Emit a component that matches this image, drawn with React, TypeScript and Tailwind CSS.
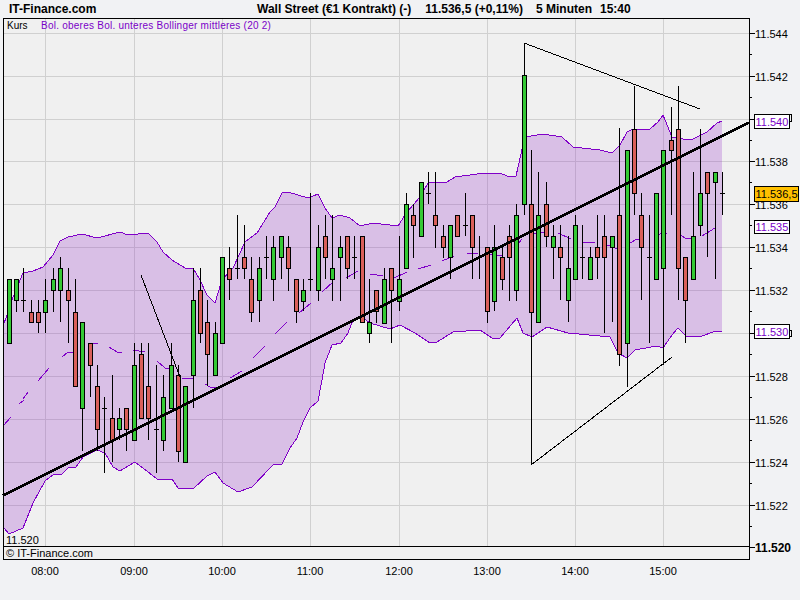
type C = [number, number, number, number, "g" | "r" | "d"];

// high, body top, body bottom, low, colour; first candle is 25 minutes before 08:00
const candles: C[] = [
  [279, 279, 343, 343, "g"], [279, 279, 300, 312, "g"], [268, 300, 300, 312, "d"], [300, 312, 322, 322, "r"],
  [300, 312, 322, 333, "r"], [279, 300, 312, 333, "g"], [268, 279, 290, 312, "g"], [257, 268, 290, 322, "g"],
  [268, 290, 300, 343, "r"], [279, 312, 386, 386, "r"], [322, 322, 408, 451, "g"], [343, 343, 365, 397, "r"],
  [365, 386, 429, 451, "r"], [397, 408, 408, 473, "d"], [375, 418, 440, 462, "r"], [408, 418, 429, 440, "g"],
  [408, 408, 429, 451, "r"], [343, 365, 440, 440, "g"], [343, 354, 418, 418, "r"], [343, 386, 418, 440, "r"],
  [365, 429, 429, 473, "d"], [375, 397, 440, 451, "g"], [343, 365, 408, 408, "g"], [365, 375, 451, 462, "r"],
  [386, 386, 462, 462, "g"], [268, 300, 375, 408, "g"], [268, 290, 333, 343, "r"], [300, 322, 354, 386, "r"],
  [322, 333, 375, 375, "g"], [257, 257, 343, 343, "g"], [247, 268, 279, 300, "r"], [215, 268, 268, 279, "d"],
  [225, 257, 268, 279, "r"], [257, 279, 312, 322, "r"], [257, 268, 300, 322, "g"], [236, 257, 257, 279, "d"],
  [236, 247, 279, 301, "g"], [236, 236, 257, 279, "g"], [236, 247, 268, 291, "r"], [279, 279, 311, 323, "r"],
  [279, 290, 301, 311, "g"], [193, 279, 279, 291, "d"], [225, 247, 290, 301, "g"], [215, 236, 257, 279, "r"],
  [215, 268, 279, 301, "g"], [236, 247, 257, 301, "g"], [236, 236, 268, 279, "r"], [236, 257, 257, 279, "d"],
  [236, 236, 322, 322, "r"], [279, 322, 333, 343, "g"], [290, 290, 311, 323, "r"], [268, 279, 323, 323, "g"],
  [268, 268, 290, 343, "r"], [236, 279, 301, 311, "g"], [193, 204, 268, 268, "g"], [204, 215, 225, 258, "r"],
  [182, 182, 236, 236, "g"], [172, 193, 193, 204, "d"], [172, 215, 225, 248, "r"], [225, 236, 247, 258, "r"],
  [225, 225, 257, 279, "g"], [215, 215, 236, 236, "r"], [193, 225, 225, 236, "d"], [215, 215, 247, 279, "r"],
  [236, 257, 257, 279, "d"], [247, 247, 311, 323, "r"], [225, 247, 301, 311, "g"], [247, 257, 279, 290, "r"],
  [225, 236, 257, 301, "r"], [204, 215, 290, 301, "g"], [43, 75, 204, 215, "g"], [150, 204, 312, 465, "r"],
  [172, 215, 322, 322, "g"], [182, 204, 236, 247, "r"], [225, 236, 247, 279, "g"], [225, 247, 257, 300, "r"],
  [236, 268, 300, 322, "g"], [215, 225, 279, 279, "g"], [225, 257, 257, 279, "d"], [247, 257, 279, 279, "g"],
  [215, 247, 257, 279, "r"], [215, 236, 257, 333, "r"], [236, 236, 247, 322, "g"], [128, 215, 354, 366, "r"],
  [150, 150, 343, 387, "g"], [86, 129, 193, 215, "r"], [193, 215, 247, 300, "r"], [215, 257, 257, 343, "d"],
  [193, 193, 279, 279, "g"], [150, 150, 268, 365, "g"], [107, 140, 150, 215, "r"], [86, 129, 268, 300, "r"],
  [257, 257, 300, 343, "r"], [172, 236, 279, 279, "g"], [129, 193, 225, 236, "g"], [172, 172, 193, 257, "r"],
  [172, 172, 182, 279, "g"], [172, 193, 193, 215, "d"],
];

const upper: [number, number][] = [
  [4, 323], [6, 318], [11, 302], [23, 273], [33, 271], [43, 267], [53, 255], [60, 241], [68, 237], [82, 234], [97, 238],
  [120, 232], [128, 235], [148, 233], [157, 242], [163, 252], [172, 260], [185, 268], [193, 268], [200, 280], [207, 295],
  [215, 303], [222, 280], [233, 268], [245, 242], [257, 233], [270, 212], [275, 207], [282, 193], [288, 192], [308, 198],
  [318, 194], [325, 208], [332, 218], [340, 215], [350, 218], [360, 226], [373, 223], [398, 226], [407, 212], [420, 197],
  [428, 183], [447, 182], [455, 177], [477, 174], [500, 173], [507, 176], [516, 176], [523, 145], [525, 137], [543, 134],
  [562, 137], [573, 147], [600, 150], [612, 153], [620, 145], [627, 132], [633, 129], [650, 129], [658, 122], [663, 115],
  [672, 137], [683, 139], [693, 139], [707, 132], [717, 123], [722, 121],
];

const lower: [number, number][] = [
  [4, 528], [9, 534], [23, 528], [33, 503], [45, 481], [53, 475], [62, 474], [68, 468], [76, 467], [83, 457], [97, 450],
  [105, 453], [113, 467], [120, 471], [135, 462], [143, 468], [157, 479], [172, 479], [178, 488], [193, 489], [207, 476],
  [215, 472], [223, 483], [238, 492], [252, 487], [270, 468], [274, 464], [282, 464], [290, 448], [297, 438], [303, 422],
  [310, 408], [318, 401], [322, 380], [325, 363], [332, 345], [341, 343], [348, 333], [353, 320], [360, 316], [370, 323],
  [390, 329], [400, 325], [415, 333], [430, 343], [437, 342], [453, 332], [480, 330], [492, 338], [500, 338], [517, 318],
  [523, 333], [532, 337], [547, 327], [568, 333], [610, 337], [618, 353], [627, 358], [635, 350], [657, 346], [663, 348],
  [672, 335], [678, 328], [686, 336], [702, 336], [713, 332], [722, 331],
];

const middle: string[] = [
  "4,425 11,417", "19,404 24,400", "23,399 28,392", "38,381 49,368", "62,357 68,352 73,352", "89,344 98,343",
  "109,347 117,352 122,352", "133,350 145,352", "157,361 165,368 170,368", "182,378 193,379", "205,384 210,387 218,387",
  "230,378 242,371", "253,358 265,346", "275,334 287,322", "299,313 311,303", "322,292 333,282", "346,278 358,271",
  "370,274 383,276", "394,278 407,272", "418,269 431,265", "442,261 454,256", "467,253 478,253", "490,254 502,256",
  "515,248 522,239", "534,234 547,232", "558,233 571,239", "583,242 595,243", "607,245 618,249", "630,243 637,239 643,239",
  "654,235 667,233", "678,233 685,238 691,238", "702,236 715,228",
];

const pts = (a: [number, number][]) => a.map((p) => p.join(",")).join(" ");
const band = pts(upper) + " " + pts([...lower].reverse());

const hGrid = [33, 76, 119, 161, 204, 247, 290, 333, 376, 419, 462, 505];
const vGrid = [45, 134, 222, 310, 399, 487, 575, 663];
const hours = ["08:00", "09:00", "10:00", "11:00", "12:00", "13:00", "14:00", "15:00"];
const yLabels = ["11.544", "11.542", "", "11.538", "11.536", "11.534", "11.532", "", "11.528", "11.526", "11.524", "11.522"];
const minor = [54, 97, 140, 182, 225, 268, 311, 354, 397, 440, 483, 526];
const FONT = "'Liberation Sans', Arial, sans-serif";

export default function App() {
  return (
    <div className="flex h-[600px] w-[800px] flex-col overflow-hidden bg-[#f1f2f4] font-['Liberation_Sans',Arial,sans-serif] text-black">
      <div className="flex h-[18px] items-center whitespace-pre text-[12px] font-bold leading-none">
        <span className="ml-[9px] w-[248px]">IT-Finance.com</span>
        <span>Wall Street (€1 Kontrakt) (-)</span>
        <span className="ml-[14px]">11.536,5 (+0,11%)</span>
        <span className="ml-[13px]">5 Minuten</span>
        <span className="ml-[8px]">15:40</span>
      </div>
      <svg width={800} height={582} viewBox="0 18 800 582" className="block" fontFamily={FONT}>
        <rect x={3} y={18} width={746} height={541} fill="#f0f0f0" />
        <g stroke="#d0d0d0" shapeRendering="crispEdges">
          {hGrid.map((y) => (
            <line key={y} x1={4} x2={749} y1={y + 0.5} y2={y + 0.5} />
          ))}
          {vGrid.map((x) => (
            <line key={x} x1={x + 0.5} x2={x + 0.5} y1={19} y2={546} />
          ))}
        </g>
        <polygon points={band} fill="#942cc8" fillOpacity={0.25} />
        <g fill="none" stroke="#8000c8" shapeRendering="crispEdges">
          <polyline points={pts(upper)} />
          <polyline points={pts(lower)} />
          {middle.map((p) => (
            <polyline key={p} points={p} />
          ))}
        </g>
        <g shapeRendering="crispEdges" stroke="#000">
          {candles.map((c, n) => {
            const x = Math.round(45.49 + 7.355 * (n - 5));
            const [hi, top, bottom, lo, kind] = c;
            return (
              <g key={n}>
                <line x1={x + 0.5} x2={x + 0.5} y1={hi} y2={lo} strokeWidth={1} />
                {kind === "d" ? (
                  <line x1={x - 2} x2={x + 3} y1={top + 0.5} y2={top + 0.5} />
                ) : (
                  <rect x={x - 1.5} y={top + 0.5} width={4} height={bottom - top} fill={kind === "g" ? "#35c935" : "#d95f5a"} />
                )}
              </g>
            );
          })}
        </g>
        <g stroke="#000" fill="none" shapeRendering="crispEdges">
          <line x1={141} y1={275} x2={180} y2={377} />
          <line x1={524} y1={43} x2={700} y2={109} />
          <line x1={531} y1={465} x2={672} y2={357} />
          <line x1={3} y1={495.5} x2={749} y2={122.5} strokeWidth={2.4} />
        </g>
        <rect x={4} y={546} width={745} height={13} fill="#f0f0f0" />
        <g stroke="#000" shapeRendering="crispEdges">
          <line x1={3.5} x2={3.5} y1={18} y2={560} />
          <line x1={3} x2={750} y1={18.5} y2={18.5} />
          <line x1={3} x2={750} y1={546.5} y2={546.5} />
          <line x1={3} x2={750} y1={559.5} y2={559.5} />
          <line x1={749.5} x2={749.5} y1={18} y2={560} />
          {hGrid.map((y) => (
            <line key={y} x1={750} x2={755} y1={y + 0.5} y2={y + 0.5} />
          ))}
          {minor.map((y) => (
            <line key={y} x1={750} x2={752} y1={y + 0.5} y2={y + 0.5} />
          ))}
          <line x1={750} x2={755} y1={547.5} y2={547.5} />
        </g>
        <text x={7} y={29} fontSize={10}>Kurs</text>
        <text x={41} y={29} fontSize={10} fill="#7a00c8" letterSpacing={0.24}>Bol. oberes Bol. unteres Bollinger mittleres (20 2)</text>
        <text x={6} y={544} fontSize={11}>11.520</text>
        <text x={6} y={557} fontSize={11}>© IT-Finance.com</text>
        {yLabels.map((t, n) =>
          t ? (
            <text key={t} x={755} y={hGrid[n] + 5} fontSize={11}>{t}</text>
          ) : null,
        )}
        <text x={755} y={552} fontSize={12} fontWeight={700}>11.520</text>
        {hours.map((h, n) => (
          <text key={h} x={vGrid[n]} y={575} fontSize={11} textAnchor="middle">{h}</text>
        ))}
        <g shapeRendering="crispEdges" stroke="#000">
          <rect x={754.5} y={114.5} width={35} height={14} fill="#fff" />
          <rect x={754.5} y={220.5} width={35} height={13} fill="#fff" />
          <rect x={754.5} y={324.5} width={35} height={14} fill="#fff" />
          <rect x={754.5} y={186.5} width={44} height={15} fill="#ffc000" />
          <path d="M790 114.5h1.5v7h-1.5M790 330.5h1.5v6h-1.5" fill="none" />
        </g>
        <text x={755.5} y={126} fontSize={11} fill="#7a00c8">11.540</text>
        <text x={755.5} y={231} fontSize={11} fill="#7a00c8">11.535</text>
        <text x={755.5} y={336} fontSize={11} fill="#7a00c8">11.530</text>
        <text x={755.5} y={198} fontSize={11}>11.536,5</text>
      </svg>
    </div>
  );
}
